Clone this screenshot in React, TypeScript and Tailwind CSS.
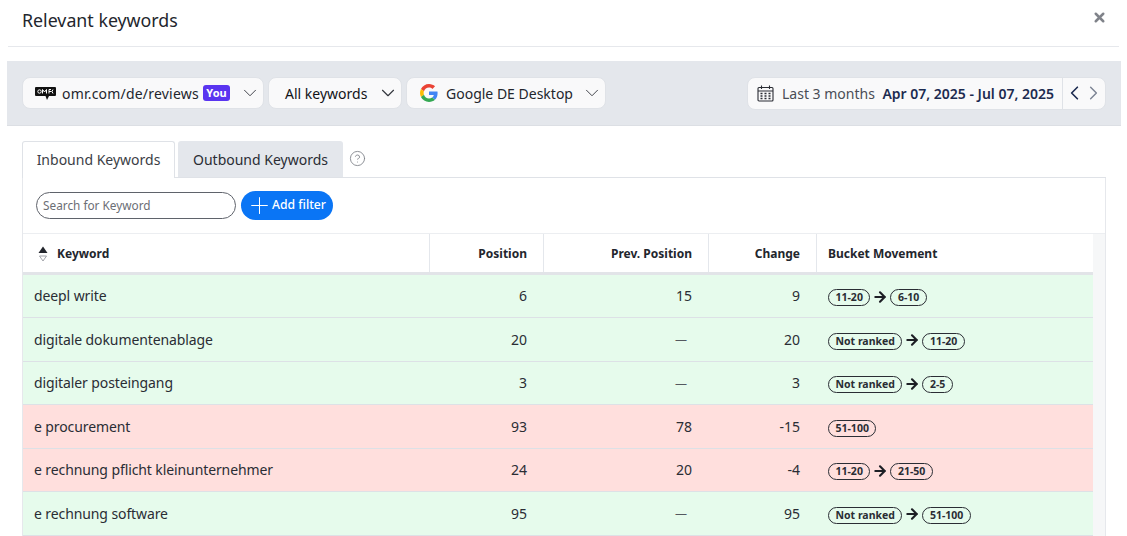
import { ChevronDown, ChevronLeft, ChevronRight, Plus, X, CircleHelp, ArrowRight } from 'lucide-react';

const rows = [
  { keyword: 'deepl write', position: '6', prev: '15', change: '9', from: '11-20', to: '6-10', up: true, h: 'h-[43px]' },
  { keyword: 'digitale dokumentenablage', position: '20', prev: '—', change: '20', from: 'Not ranked', to: '11-20', up: true, h: 'h-[44px]' },
  { keyword: 'digitaler posteingang', position: '3', prev: '—', change: '3', from: 'Not ranked', to: '2-5', up: true, h: 'h-[43px]' },
  { keyword: 'e procurement', position: '93', prev: '78', change: '-15', from: '51-100', to: '', up: false, h: 'h-[44px]' },
  { keyword: 'e rechnung pflicht kleinunternehmer', position: '24', prev: '20', change: '-4', from: '11-20', to: '21-50', up: false, h: 'h-[43px]' },
  { keyword: 'e rechnung software', position: '95', prev: '—', change: '95', from: 'Not ranked', to: '51-100', up: true, h: 'h-[44px]' },
];

function Bucket({ label }: { label: string }) {
  return (
    <span className="inline-flex items-center h-[17px] px-[6.5px] rounded-full border border-[#2a2d34] text-[10.5px] font-bold text-[#2a2d34] leading-none">
      {label}
    </span>
  );
}

function GoogleLogo() {
  return (
    <svg className="w-[18px] h-[18px]" viewBox="0 0 48 48">
      <path fill="#EA4335" d="M24 9.5c3.5 0 6.7 1.2 9.2 3.6l6.9-6.9C35.9 2.4 30.5 0 24 0 14.6 0 6.5 5.4 2.6 13.2l8 6.2C12.5 13.7 17.8 9.5 24 9.5z" />
      <path fill="#4285F4" d="M46.9 24.5c0-1.6-.1-3.1-.4-4.5H24v9h12.9c-.6 3-2.2 5.5-4.7 7.2l7.7 6c4.5-4.2 7-10.3 7-17.7z" />
      <path fill="#FBBC05" d="M10.5 28.6c-.5-1.4-.8-3-.8-4.6s.3-3.2.8-4.6l-8-6.2C.9 16.5 0 20.1 0 24s.9 7.5 2.6 10.8l7.9-6.2z" />
      <path fill="#34A853" d="M24 48c6.5 0 11.9-2.1 15.9-5.8l-7.7-6c-2.1 1.4-4.9 2.3-8.2 2.3-6.2 0-11.5-4.2-13.4-9.9l-8 6.2C6.5 42.6 14.6 48 24 48z" />
    </svg>
  );
}

function OmrLogo() {
  return (
    <svg className="w-[21px] h-[15px]" viewBox="0 0 21 15">
      <path fill="#111" d="M1 1h19a1 1 0 0 1 1 1v7a1 1 0 0 1-1 1h-6l-2 4-1.5-4H1a1 1 0 0 1-1-1V2a1 1 0 0 1 1-1z" />
      <circle cx="4.5" cy="5.5" r="1.7" fill="none" stroke="#fff" strokeWidth="1" />
      <path fill="none" stroke="#fff" strokeWidth="1" d="M7.5 7.5v-4l2 2.5 2-2.5v4M14 7.5v-4h2M14 5.5h2.5M18 3.5l-1 2 1 2" />
    </svg>
  );
}

function CalendarIcon() {
  return (
    <svg className="w-[17px] h-[17px] text-[#2a2d34]" viewBox="0 0 17 17" fill="none" stroke="currentColor" strokeWidth="1.1">
      <rect x="1" y="2.5" width="15" height="13.5" rx="1" />
      <path d="M1 6h15M4.5 0.5v3.5M12.5 0.5v3.5" />
      <path strokeWidth="1.5" d="M3.5 8.5h2M7.5 8.5h2M11.5 8.5h2M3.5 11h2M7.5 11h2M11.5 11h2M3.5 13.5h2M7.5 13.5h2M11.5 13.5h2" />
    </svg>
  );
}

export default function App() {
  return (
    <div className="w-[1127px] h-[536px] overflow-hidden bg-white font-['Noto_Sans',sans-serif] text-[#2a2d34]">
      {/* Modal title */}
      <div className="mx-2 h-[47px] border-b border-[#e6e8ec] flex items-start justify-between pl-[14px] pr-[12.5px]">
        <h1 className="text-[17.8px] leading-[24px] mt-2 font-normal text-[#23262d]">Relevant keywords</h1>
        <X className="w-[15px] h-[15px] mt-[9.5px] text-[#80838a]" strokeWidth={4} />
      </div>

      {/* Controls band */}
      <div className="mt-[14px] ml-[7px] w-[1114px] h-[65px] bg-[#e4e7ec] border-b border-[#dcdfe4] flex items-center justify-between pl-[15px] pr-[15px]">
        <div className="flex items-center gap-[4px]">
          <div className="h-[32px] w-[242px] flex items-center rounded-[8px] border border-[#dfe2e7] bg-[#f9f9fa] pl-[12px] pr-[2px]">
            <OmrLogo />
            <span className="ml-[6px] text-[14px] tracking-[0.2px] text-[#23262d]">omr.com/de/reviews</span>
            <span className="ml-[4px] h-[16px] px-[3.5px] rounded-[3px] bg-[#5a35f0] text-white text-[11px] font-bold leading-[15px]">You</span>
            <ChevronDown className="ml-auto w-[22px] h-[22px] text-[#33363d]" strokeWidth={1} />
          </div>
          <div className="h-[32px] w-[134px] flex items-center rounded-[8px] border border-[#dfe2e7] bg-[#f9f9fa] pl-[16px] pr-[2.5px]">
            <span className="text-[14px] text-[#111318]">All keywords</span>
            <ChevronDown className="ml-auto w-[22px] h-[22px] text-[#33363d]" strokeWidth={1.25} />
          </div>
          <div className="h-[32px] w-[200px] flex items-center rounded-[8px] border border-[#dfe2e7] bg-[#f9f9fa] pl-[13px] pr-[2.5px]">
            <GoogleLogo />
            <span className="ml-[8px] text-[14px] text-[#23262d]">Google DE Desktop</span>
            <ChevronDown className="ml-auto w-[22px] h-[22px] text-[#33363d]" strokeWidth={1} />
          </div>
        </div>
        <div className="h-[33px] w-[359px] flex items-center rounded-[8px] border border-[#dfe2e7] bg-[#f9f9fa]">
          <div className="flex-1 flex items-center pl-[9px] h-full">
            <CalendarIcon />
            <span className="ml-[8px] text-[14px] text-[#4a4d55]">Last 3 months</span>
            <span className="ml-[7.5px] text-[14px] font-semibold text-[#1c2b50]">Apr 07, 2025 - Jul 07, 2025</span>
          </div>
          <div className="w-[43px] h-full border-l border-[#dfe2e7] flex items-center justify-center">
            <ChevronLeft className="w-[24px] h-[24px] text-[#1c2b50]" strokeWidth={1.75} />
            <ChevronRight className="-ml-[4px] w-[24px] h-[24px] text-[#7c8494]" strokeWidth={1.5} />
          </div>
        </div>
      </div>

      {/* Tabs */}
      <div className="mt-[15px] ml-[22px] w-[1084px] h-[37px] flex items-end gap-[3px] border-b border-[#dfe2e7]">
        <div className="relative z-10 w-[153px] h-[37px] -mb-px bg-white border border-b-0 border-[#dfe2e7] rounded-t-[3px] flex items-center justify-center pb-[2px] text-[14px] text-[#3b3e46]">
          Inbound Keywords
        </div>
        <div className="w-[165px] h-[36px] bg-[#e4e7ec] rounded-t-[3px] flex items-center justify-center text-[14px] text-[#2a2d34]">
          Outbound Keywords
        </div>
        <CircleHelp className="ml-[2.5px] mb-[10px] w-[17px] h-[17px] text-[#80838a]" strokeWidth={1.25} />
      </div>

      {/* Table panel */}
      <div className="ml-[22px] w-[1084px] border-x border-[#e6e8ec]">
        <div className="h-[56px] flex items-center pl-[13px] gap-[5px] border-b border-[#eceef1]">
          <div className="w-[200px] h-[27px] rounded-full border border-[#5f636b] flex items-center pl-[6px] text-[11.8px] text-[#6b6e75]">
            Search for Keyword
          </div>
          <div className="w-[92px] h-[29px] rounded-full bg-[#0a75f5] flex items-center pl-[4.5px] text-white text-[12.2px] font-medium">
            <Plus className="w-[27px] h-[27px] shrink-0 -mr-[0.5px]" strokeWidth={0.9} />
            <span className="-mt-[1px]">Add filter</span>
          </div>
        </div>

        <div className="flex">
          <div className="w-[1070px]">
            {/* Header */}
            <div className="h-[41px] flex items-center bg-white border-b-[3px] border-[#e2e4e8] text-[12px] font-bold text-[#23262d]">
              <div className="w-[407px] h-full flex items-center pl-[15px] pt-px border-r border-[#e4e7ec]">
                <svg className="w-[10px] h-[16px] mr-[9px]" viewBox="0 0 10 16">
                  <path fill="#23262d" d="M5 0.5L9.5 7H0.5z" />
                  <path fill="none" stroke="#8b8e95" strokeWidth="0.8" d="M1.5 10h7L5 15z" />
                </svg>
                Keyword
              </div>
              <div className="w-[114px] h-full flex items-center justify-end pr-[16px] pt-px border-r border-[#e4e7ec]">Position</div>
              <div className="w-[165px] h-full flex items-center justify-end pr-[16px] pt-px border-r border-[#e4e7ec]">Prev. Position</div>
              <div className="w-[108px] h-full flex items-center justify-end pr-[16px] pt-px border-r border-[#e4e7ec]">Change</div>
              <div className="flex-1 h-full flex items-center pl-[11px] pt-px">Bucket Movement</div>
            </div>

            {/* Rows */}
            {rows.map((row) => (
              <div
                key={row.keyword}
                className={`${row.h} flex items-center border-b border-[#dde1e6] text-[14px] leading-[20px] text-[#2a2d34] ${row.up ? 'bg-[#e6fbec]' : 'bg-[#ffdfdd]'}`}
              >
                <div className="w-[406px] pl-[11px] tracking-[-0.1px]">{row.keyword}</div>
                <div className="w-[114px] text-right pr-[16px]">{row.position}</div>
                <div className="w-[165px] text-right pr-[16px]">
                  {row.prev === '—' ? <span className="mr-[5px] text-[12px] text-[#55585f]">—</span> : row.prev}
                </div>
                <div className="w-[108px] text-right pr-[16px]">{row.change}</div>
                <div className="flex-1 flex items-center pl-[12px] pt-[3px]">
                  <Bucket label={row.from} />
                  {row.to && (
                    <>
                      <ArrowRight className="mx-[2px] -mt-[2px] w-[16px] h-[16px] text-[#1d1f25]" strokeWidth={3.2} />
                      <Bucket label={row.to} />
                    </>
                  )}
                </div>
              </div>
            ))}
          </div>
          <div className="flex-1 bg-[#f6f7f8]" />
        </div>
      </div>
    </div>
  );
}
